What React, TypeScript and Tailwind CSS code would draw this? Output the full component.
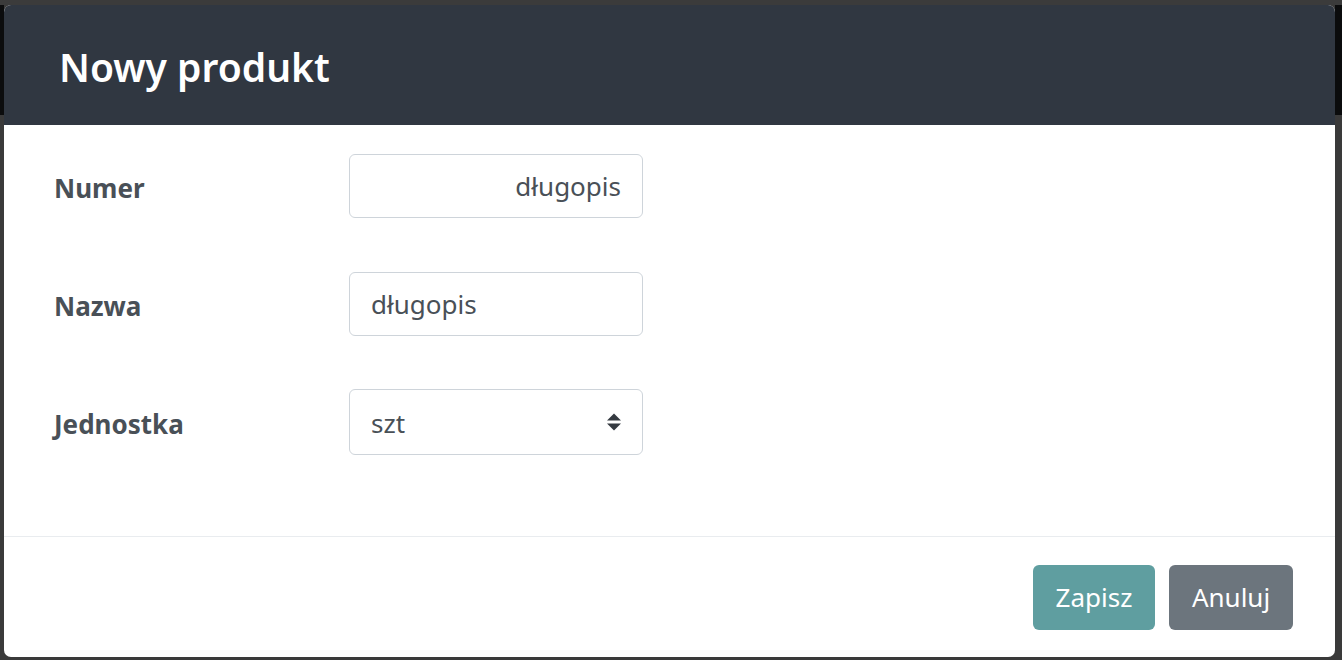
import { useState } from "react";

const font = { fontFamily: '"Noto Sans", "Open Sans", Arial, sans-serif' };

function Field({ label, children }: { label: string; children: React.ReactNode }) {
  return (
    <div className="flex items-center">
      <label className="w-[295px] shrink-0 pt-[4px] text-[26px] font-bold text-[#495057]">{label}</label>
      {children}
    </div>
  );
}

export default function App() {
  const [numer, setNumer] = useState("długopis");
  const [nazwa, setNazwa] = useState("długopis");
  const [unit, setUnit] = useState("szt");

  return (
    <div className="h-[660px] w-[1342px] overflow-hidden bg-[#3a3a3a] flex flex-col" style={font}>
      <div className="h-[5px] shrink-0 bg-[#3b3b3b]" />
      <div className="flex flex-1 min-h-0">
        <div className="w-[4px] flex flex-col">
          <div className="h-[110px] bg-[#0b0c0d]" />
        </div>

        {/* modal */}
        <div className="w-[1331px] h-[652px] flex flex-col bg-white rounded-[7px] overflow-hidden">
          <div className="h-[120px] shrink-0 bg-[#303741] flex items-center pl-[55px] pt-[3px]">
            <h1 className="text-[39px] font-semibold text-white leading-none">Nowy produkt</h1>
          </div>

          <div className="flex flex-col gap-[54px] pl-[50px] pt-[29px] h-[412px] border-b border-[#e9ecef]">
            <Field label="Numer">
              <input
                value={numer}
                onChange={(e) => setNumer(e.target.value)}
                className="h-[64px] w-[294px] rounded-[6px] border border-[#ced4da] px-[21px] text-right text-[26px] text-[#495057] outline-none"
                style={font}
              />
            </Field>
            <Field label="Nazwa">
              <input
                value={nazwa}
                onChange={(e) => setNazwa(e.target.value)}
                className="h-[64px] w-[294px] rounded-[6px] border border-[#ced4da] px-[21px] text-[26px] text-[#495057] outline-none"
                style={font}
              />
            </Field>
            <div className="-mt-[1px]">
              <Field label="Jednostka">
                <div className="relative">
                  <select
                    value={unit}
                    onChange={(e) => setUnit(e.target.value)}
                    className="appearance-none h-[66px] w-[294px] rounded-[6px] border border-[#ced4da] bg-white pl-[21px] pt-[2px] text-[26px] text-[#495057] outline-none"
                    style={font}
                  >
                    <option value="szt">szt</option>
                    <option value="kg">kg</option>
                    <option value="m">m</option>
                  </select>
                  <svg className="pointer-events-none absolute right-[21px] top-[24px]" width="16" height="18" viewBox="0 0 16 18">
                    <path d="M1 7.5 L8 0.5 L15 7.5 Z" fill="#343a40" />
                    <path d="M1 10.5 L15 10.5 L8 17.5 Z" fill="#343a40" />
                  </svg>
                </div>
              </Field>
            </div>
          </div>

          <div className="flex flex-1 items-start justify-end gap-[14px] pt-[28px] pr-[42px]">
            <button className="h-[65px] w-[122px] rounded-[6px] bg-[#5f9ea0] text-[26px] text-white">Zapisz</button>
            <button className="h-[65px] w-[124px] rounded-[6px] bg-[#6c757d] text-[26px] text-white">Anuluj</button>
          </div>
        </div>

        <div className="flex-1 flex flex-col">
          <div className="h-[110px] bg-[#0b0c0d]" />
        </div>
      </div>
    </div>
  );
}
